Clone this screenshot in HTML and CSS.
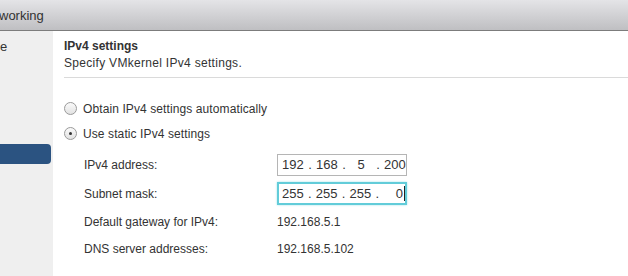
FILE: index.html
```html
<!DOCTYPE html>
<html lang="en">
<head>
	<title>Networking</title>
	<link rel="stylesheet" href="styles.css">
</head>
<body>
	<div id="header">
		<span class="title">working</span>
	</div>
	<div class="main">
		<div class="sidebar">
			<div class="step">e</div>
			<div class="step current"></div>
		</div>
		<div class="content">
			<div class="section-head">
				<h2>IPv4 settings</h2>
				<p>Specify VMkernel IPv4 settings.</p>
			</div>

			<div class="choices">
				<div class="choice">
					<span class="radio"></span>
					<span>Obtain IPv4 settings automatically</span>
				</div>
				<div class="choice">
					<span class="radio checked"></span>
					<span>Use static IPv4 settings</span>
				</div>
			</div>

			<div class="fields">
				<div class="row">
					<label>IPv4 address:</label>
					<div class="ip">
						<span>192</span><span class="dot">.</span><span>168</span><span class="dot">.</span><span class="oct">5</span><span class="dot">.</span><span>200</span>
					</div>
				</div>
				<div class="row">
					<label>Subnet mask:</label>
					<div class="ip focus">
						<span>255</span><span class="dot">.</span><span>255</span><span class="dot">.</span><span>255</span><span class="dot">.</span><span class="last">0<i class="caret"></i></span>
					</div>
				</div>
				<div class="row text-row">
					<label>Default gateway for IPv4:</label>
					<span>192.168.5.1</span>
				</div>
				<div class="row text-row">
					<label>DNS server addresses:</label>
					<span>192.168.5.102</span>
				</div>
			</div>
		</div>
	</div>
</body>
</html>
```
FILE: styles.css
```css
body {
	margin: 0;
	padding: 0;
	font-family: 'Liberation Sans', Arial, sans-serif;
	font-size: 12px;
	color: #333;
	background: #fff;
	overflow: hidden;
}

#header {
	height: 30px;
	background: linear-gradient(#e4e4e7, #bfbfc2);
	border-bottom: 1px solid #7c7c7c;
	display: flex;
	align-items: center;
}

#header .title {
	font-size: 13px;
	color: #333;
	margin-left: -1px;
}

.main {
	display: flex;
	height: 245px;
}

.sidebar {
	width: 53px;
	background: #efefef;
	flex-shrink: 0;
}

.step {
	font-size: 13px;
	padding-top: 8px;
	height: 16px;
}

.step.current {
	margin-top: 89px;
	width: 51px;
	height: 20px;
	padding: 0;
	background: #2b5381;
	border-radius: 0 4px 4px 0;
}

.content {
	flex: 1;
	padding-left: 11px;
}

.section-head {
	border-bottom: 1px solid #dadada;
	padding-top: 7px;
	padding-bottom: 6px;
}

h2 {
	font-size: 12px;
	font-weight: bold;
	margin: 0;
	line-height: 16px;
}

.section-head p {
	margin: 1px 0 0;
	line-height: 16px;
	letter-spacing: 0.3px;
}

.choices {
	margin-top: 18px;
}

.choice {
	display: flex;
	align-items: center;
	height: 25px;
	letter-spacing: 0.1px;
}

.radio {
	width: 11px;
	height: 11px;
	border: 1px solid #9a9a9a;
	border-radius: 50%;
	background: linear-gradient(#fafafa, #e2e2e2);
	margin-right: 6px;
	position: relative;
}

.radio.checked::after {
	content: "";
	position: absolute;
	left: 4px;
	top: 4px;
	width: 3px;
	height: 3px;
	border-radius: 50%;
	background: #333;
}

.fields {
	padding-left: 20px;
	margin-top: 4px;
}

.row {
	display: flex;
	align-items: center;
	height: 29px;
}

.row label {
	width: 193px;
}

.text-row {
	height: 27px;
}

.ip {
	width: 124px;
	height: 20px;
	border: 1px solid #b5b5b5;
	display: flex;
	align-items: center;
	padding-left: 4px;
	box-sizing: content-box;
	font-size: 13px;
	color: #333;
}

.ip span {
	width: 22px;
}

.ip .dot {
	width: 12px;
	text-align: center;
}

.ip .oct {
	text-align: center;
}

.ip.focus {
	border: 2px solid #62ccd9;
	box-shadow: 0 0 2px #9fe3ea;
	width: 123px;
	height: 19px;
	padding-left: 3px;
}

.ip .last {
	text-align: right;
	position: relative;
}

.caret {
	display: inline-block;
	width: 1px;
	height: 15px;
	background: #222;
	vertical-align: -3px;
	margin-left: 1px;
}
```
